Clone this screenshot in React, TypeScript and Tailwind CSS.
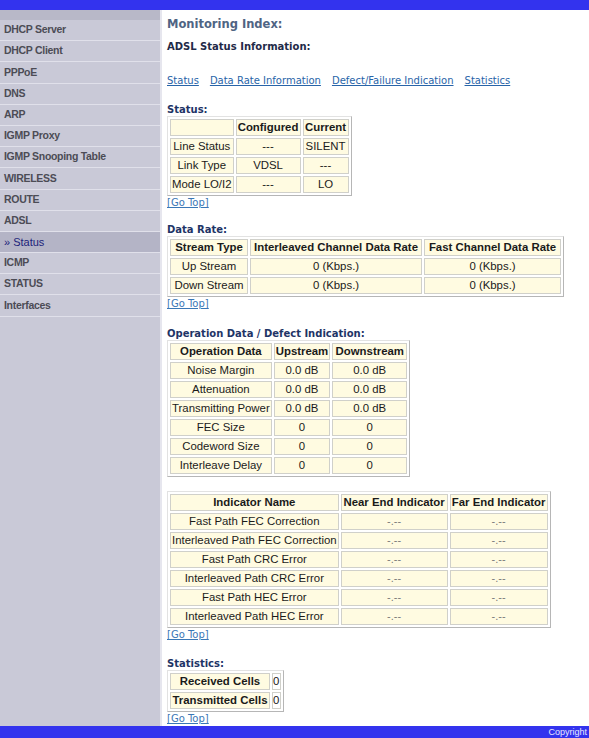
import React from 'react';

const menu = [
  'DHCP Server',
  'DHCP Client',
  'PPPoE',
  'DNS',
  'ARP',
  'IGMP Proxy',
  'IGMP Snooping Table',
  'WIRELESS',
  'ROUTE',
  'ADSL',
  '» Status',
  'ICMP',
  'STATUS',
  'Interfaces',
];

const tableCls =
  "border-separate border-spacing-[2px] border border-[#e2e2e2] border-r-[#b6b6b6] border-b-[#b6b6b6] bg-white font-['Liberation_Sans',Arial,sans-serif] text-[11.4px] text-[#1a1a1a]";
const cellCls =
  'border border-[#d0d0ca] bg-[#fffbe1] px-px py-0 leading-[15px] text-center whitespace-nowrap';
const headCls = cellCls + ' font-bold';

const Heading: React.FC<{ title: string; className?: string }> = ({ title, className }) => (
  <div
    className={
      "font-['DejaVu_Sans',Verdana,sans-serif] text-[10px] font-bold leading-[12px] text-[#1e3466] " +
      (className ?? '')
    }
  >
    {title}
  </div>
);

const GoTop: React.FC = () => (
  <div className="font-['DejaVu_Sans',Verdana,sans-serif] text-[10px] leading-[14px]">
    <a href="#" className="text-[#3a77b6] underline">
      [Go Top]
    </a>
  </div>
);

type Row = string[];

const DataTable: React.FC<{ head: Row; rows: Row[]; widths: string[]; valueCls?: string }> = ({
  head,
  rows,
  widths,
  valueCls,
}) => (
  <table className={tableCls}>
    <tbody>
      <tr>
        {head.map((h, i) => (
          <td key={i} className={headCls + ' ' + widths[i]}>
            {h}
          </td>
        ))}
      </tr>
      {rows.map((r, ri) => (
        <tr key={ri}>
          {r.map((c, ci) => (
            <td key={ci} className={cellCls + (ci > 0 && valueCls ? ' ' + valueCls : '')}>
              {c}
            </td>
          ))}
        </tr>
      ))}
    </tbody>
  </table>
);

const App: React.FC = () => {
  return (
    <div className="min-h-screen bg-white">
      <div className="h-[10px] bg-[#3333ee]" />
      <div className="flex">
        {/* left menu */}
        <div className="w-[162px] shrink-0 bg-[#c9c9d7] border-r-2 border-[#e6e6ee]">
          <div className="h-[10px] bg-[#b8b8c8]" />
          {menu.map((m) => {
            const active = m.startsWith('»');
            return (
              <div
                key={m}
                className={
                  "flex h-[21.2px] items-center border-b border-[#e0e0ea] pl-[4px] font-['Liberation_Sans',Arial,sans-serif] " +
                  (active
                    ? 'bg-[#b4b4c6] text-[11px] text-[#1c237a]'
                    : 'text-[10.5px] font-bold tracking-[-0.3px] text-[#4c4c55]')
                }
              >
                {m}
              </div>
            );
          })}
        </div>

        {/* main content */}
        <div className="flex-1 pl-[5px] pt-[7px]">
          <div className="font-['DejaVu_Sans',Verdana,sans-serif] text-[11.5px] font-bold leading-[14px] text-[#4f6483]">
            Monitoring Index:
          </div>
          <div className="mt-[9px] font-['DejaVu_Sans',Verdana,sans-serif] text-[10px] font-bold leading-[14px] text-[#1f2a48]">
            ADSL Status Information:
          </div>
          <div className="mt-[20px] flex gap-[11px] font-['DejaVu_Sans',Verdana,sans-serif] text-[10px] leading-[14px]">
            {['Status', 'Data Rate Information', 'Defect/Failure Indication', 'Statistics'].map((l) => (
              <a key={l} href="#" className="text-[#2864a8] underline">
                {l}
              </a>
            ))}
          </div>

          <Heading title="Status:" className="mt-[16px]" />
          <DataTable
            head={['', 'Configured', 'Current']}
            widths={['w-[59px]', 'w-[65px]', 'w-[46px]']}
            rows={[
              ['Line Status', '---', 'SILENT'],
              ['Link Type', 'VDSL', '---'],
              ['Mode LO/I2', '---', 'LO'],
            ]}
          />
          <GoTop />

          <Heading title="Data Rate:" className="mt-[14px]" />
          <DataTable
            head={['Stream Type', 'Interleaved Channel Data Rate', 'Fast Channel Data Rate']}
            widths={['w-[78px]', 'w-[172px]', 'w-[137px]']}
            rows={[
              ['Up Stream', '0 (Kbps.)', '0 (Kbps.)'],
              ['Down Stream', '0 (Kbps.)', '0 (Kbps.)'],
            ]}
          />
          <GoTop />

          <Heading title="Operation Data / Defect Indication:" className="mt-[17px]" />
          <DataTable
            head={['Operation Data', 'Upstream', 'Downstream']}
            widths={['w-[101px]', 'w-[55px]', 'w-[75px]']}
            rows={[
              ['Noise Margin', '0.0 dB', '0.0 dB'],
              ['Attenuation', '0.0 dB', '0.0 dB'],
              ['Transmitting Power', '0.0 dB', '0.0 dB'],
              ['FEC Size', '0', '0'],
              ['Codeword Size', '0', '0'],
              ['Interleave Delay', '0', '0'],
            ]}
          />

          <div className="mt-[14px]">
            <DataTable
              head={['Indicator Name', 'Near End Indicator', 'Far End Indicator']}
              widths={['w-[166px]', 'w-[107px]', 'w-[98px]']}
              valueCls="text-[#7a7a7a] text-[11px]"
              rows={[
                ['Fast Path FEC Correction', '-.--', '-.--'],
                ['Interleaved Path FEC Correction', '-.--', '-.--'],
                ['Fast Path CRC Error', '-.--', '-.--'],
                ['Interleaved Path CRC Error', '-.--', '-.--'],
                ['Fast Path HEC Error', '-.--', '-.--'],
                ['Interleaved Path HEC Error', '-.--', '-.--'],
              ]}
            />
          </div>
          <GoTop />

          <Heading title="Statistics:" className="mt-[16px]" />
          <table className={tableCls}>
            <tbody>
              {['Received Cells', 'Transmitted Cells'].map((s) => (
                <tr key={s}>
                  <td className={headCls + ' w-[100px]'}>{s}</td>
                  <td className="w-[9px] border border-[#d0d0ca] bg-white p-0 text-left leading-[15px]">0</td>
                </tr>
              ))}
            </tbody>
          </table>
          <GoTop />
        </div>
      </div>
      <div className="flex h-[20px] items-start justify-end overflow-hidden bg-[#3333ee] pr-[2px] pt-px">
        <span className="whitespace-nowrap font-['Liberation_Sans',Arial,sans-serif] text-[9px] leading-[10px] text-[#e8e8ff]">
          Copyright
        </span>
      </div>
    </div>
  );
};

export default App;
